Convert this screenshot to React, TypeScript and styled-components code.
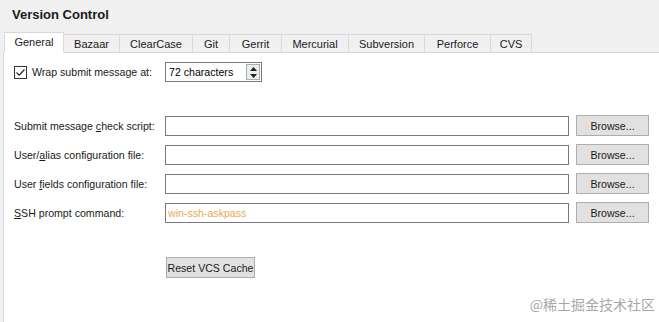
import React from "react";
import styled, { createGlobalStyle } from "styled-components";

const Global = createGlobalStyle`
  html, body { margin: 0; padding: 0; }
  body {
    background: #f0f0f0;
    font-family: "Liberation Sans", Arial, sans-serif;
    font-size: 10.6px;
    color: #000;
    width: 659px;
    height: 322px;
    overflow: hidden;
    white-space: nowrap;
  }
`;

const Page = styled.div`
  position: relative;
  width: 659px;
  height: 322px;
  display: flex;
  flex-direction: column;
  overflow: hidden;
`;

const Title = styled.div`
  font-weight: bold;
  font-size: 13px;
  padding: 7px 0 0 12px;
  height: 32px;
  box-sizing: border-box;
  color: #1a1a1a;
`;

const TabStrip = styled.div`
  display: flex;
  align-items: flex-end;
  padding-left: 4px;
  height: 21px;
  position: relative;
  z-index: 1;
  margin-bottom: -1px;
  font-size: 11px;
`;

const Tab = styled.div<{ $active?: boolean; $w: number }>`
  width: ${(p) => p.$w}px;
  box-sizing: border-box;
  height: ${(p) => (p.$active ? 21 : 19)}px;
  display: flex;
  align-items: center;
  justify-content: center;
  background: ${(p) => (p.$active ? "#ffffff" : "#f0f0f0")};
  border: 1px solid #d9d9d9;
  border-bottom: ${(p) => (p.$active ? "1px solid #ffffff" : "1px solid #d9d9d9")};
  border-left: ${(p) => (p.$active ? "1px solid #d9d9d9" : "none")};
  padding-bottom: ${(p) => (p.$active ? 2 : 0)}px;
  color: #1a1a1a;
`;

const Panel = styled.div`
  flex: 1;
  margin-left: 3px;
  background: #fff;
  border-left: 1px solid #d9d9d9;
  border-top: 1px solid #d9d9d9;
  padding: 9px 0 0 10px;
  display: flex;
  flex-direction: column;
`;

const CheckRow = styled.div`
  display: flex;
  align-items: center;
  height: 20px;
`;

const CheckBox = styled.div`
  width: 13px;
  height: 13px;
  box-sizing: border-box;
  border: 1px solid #333;
  background: #fff;
  display: flex;
  align-items: center;
  justify-content: center;
  margin-right: 5px;
`;

const CheckLabel = styled.span`
  width: 133px;
  color: #1a1a1a;
`;

const Spin = styled.div`
  width: 97px;
  height: 20px;
  box-sizing: border-box;
  border: 1px solid #7a7a7a;
  display: flex;
  align-items: center;
  justify-content: space-between;
  padding: 0 1px 0 3px;
`;

const SpinButtons = styled.div`
  width: 14px;
  height: 16px;
  box-sizing: border-box;
  border: 1px solid #adadad;
  background: #e9eef0;
  display: flex;
  flex-direction: column;
  align-items: center;
  justify-content: space-around;
`;

const Form = styled.div`
  display: grid;
  grid-template-columns: 144px 404px 73px;
  column-gap: 7px;
  row-gap: 8px;
  margin-top: 33px;
  align-items: center;
`;

const Label = styled.div`
  height: 20px;
  line-height: 20px;
  color: #1a1a1a;
`;

const Field = styled.div`
  height: 20px;
  box-sizing: border-box;
  border: 1px solid #7a7a7a;
  background: #fff;
  padding-left: 2px;
  line-height: 18px;
  color: #e6ab55;
`;

const Button = styled.div<{ $w: number }>`
  width: ${(p) => p.$w}px;
  height: 21px;
  box-sizing: border-box;
  border: 1px solid #adadad;
  background: #e1e1e1;
  display: flex;
  align-items: center;
  justify-content: center;
  color: #1a1a1a;
`;

const ResetWrap = styled.div`
  margin-top: 34px;
  padding-left: 152px;
`;

const U = styled.span`
  text-decoration: underline;
`;

const Watermark = styled.div`
  position: absolute;
  right: 4px;
  bottom: 8px;
  font-family: "Noto Sans CJK SC", sans-serif;
  font-size: 14px;
  color: #a8a8a8;
`;

const tabs: [string, number][] = [
  ["General", 60],
  ["Bazaar", 56],
  ["ClearCase", 73],
  ["Git", 37],
  ["Gerrit", 52],
  ["Mercurial", 67],
  ["Subversion", 76],
  ["Perforce", 66],
  ["CVS", 41],
];

export default function App() {
  return (
    <Page>
      <Global />
      <Title>Version Control</Title>
      <TabStrip>
        {tabs.map(([t, w], i) => (
          <Tab key={t} $w={w} $active={i === 0}>
            {t}
          </Tab>
        ))}
      </TabStrip>
      <Panel>
        <CheckRow>
          <CheckBox>
            <svg width="11" height="11" viewBox="0 0 11 11">
              <path d="M1.5 5.5 L4.2 8.2 L9.5 2.5" fill="none" stroke="#222" strokeWidth="1.2" />
            </svg>
          </CheckBox>
          <CheckLabel>Wrap submit message at:</CheckLabel>
          <Spin>
            <span>72 characters</span>
            <SpinButtons>
              <svg width="7" height="4" viewBox="0 0 7 4">
                <path d="M0 4 L3.5 0 L7 4 Z" fill="#222" />
              </svg>
              <svg width="7" height="4" viewBox="0 0 7 4">
                <path d="M0 0 L3.5 4 L7 0 Z" fill="#222" />
              </svg>
            </SpinButtons>
          </Spin>
        </CheckRow>
        <Form>
          <Label>
            Submit message <U>c</U>heck script:
          </Label>
          <Field />
          <Button $w={73}>Browse...</Button>
          <Label>
            User/<U>a</U>lias configuration file:
          </Label>
          <Field />
          <Button $w={73}>Browse...</Button>
          <Label>
            User <U>f</U>ields configuration file:
          </Label>
          <Field />
          <Button $w={73}>Browse...</Button>
          <Label>
            <U>S</U>SH prompt command:
          </Label>
          <Field>win-ssh-askpass</Field>
          <Button $w={73}>Browse...</Button>
        </Form>
        <ResetWrap>
          <Button $w={89}>Reset VCS Cache</Button>
        </ResetWrap>
      </Panel>
      <Watermark>@稀土掘金技术社区</Watermark>
    </Page>
  );
}
